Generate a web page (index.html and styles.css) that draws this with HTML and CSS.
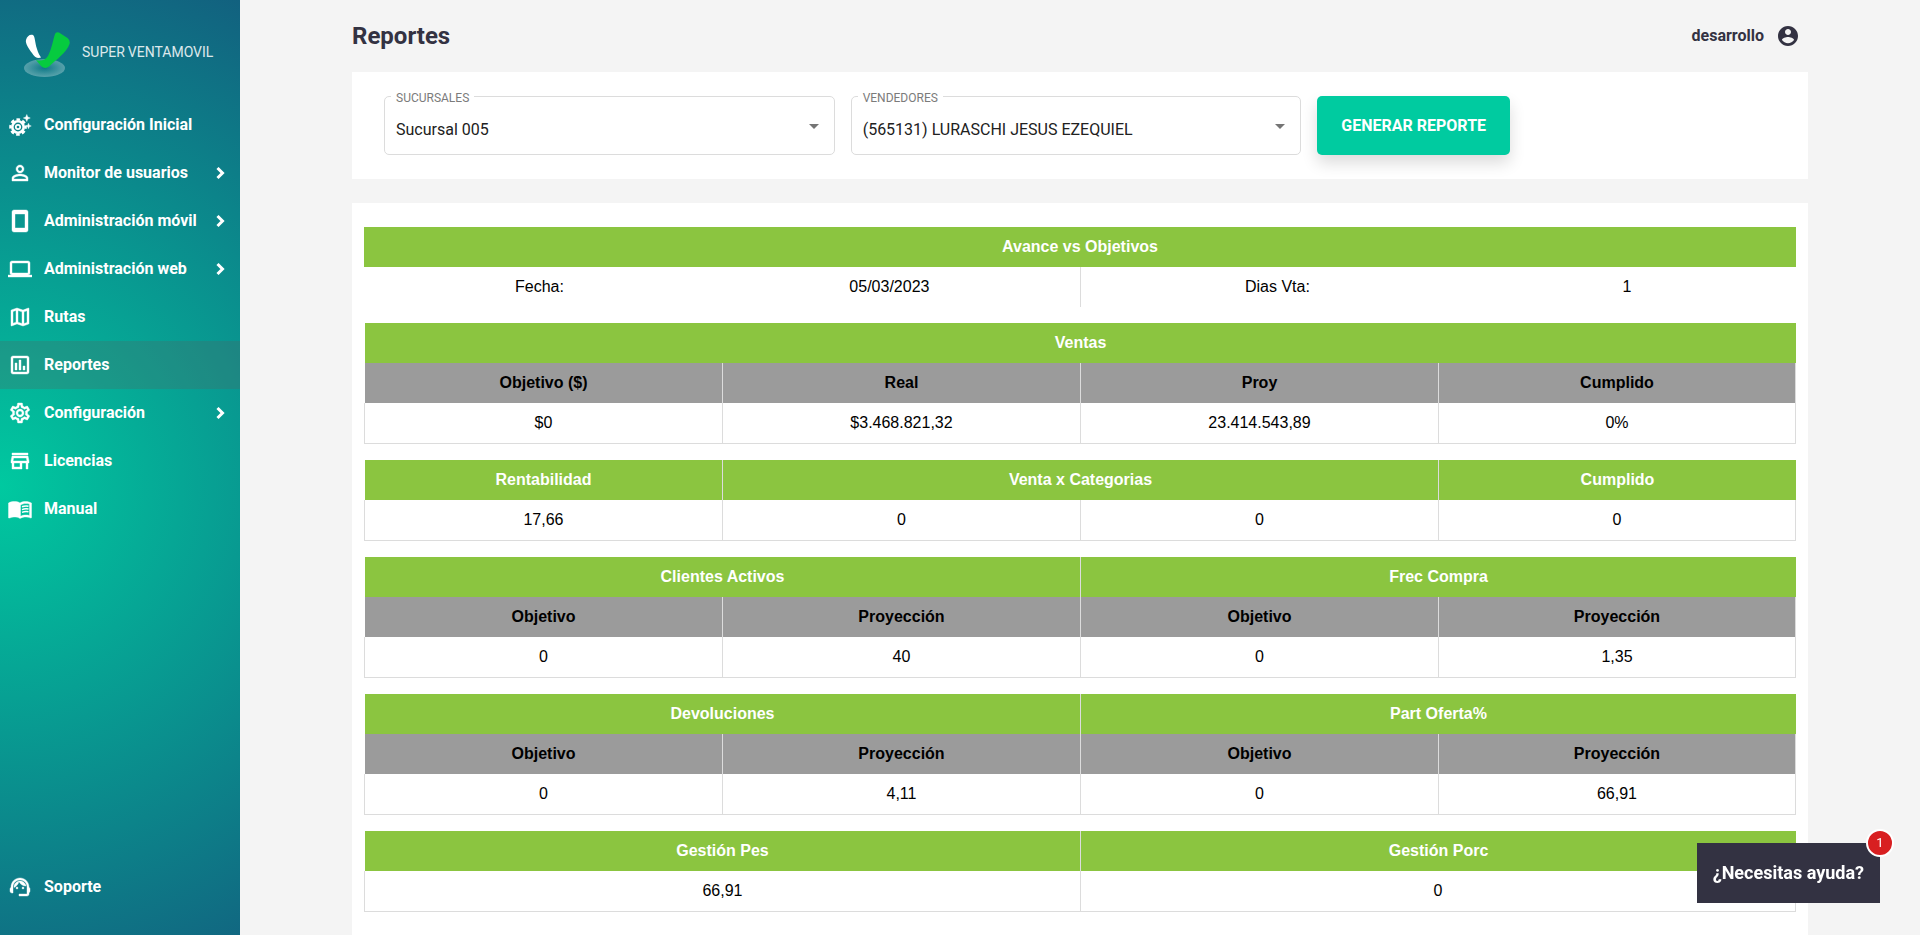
FILE: index.html
```html
<!DOCTYPE html>
<html lang="es">
<head>
<meta charset="utf-8">
<title>Reportes - Super Ventamovil</title>
<link rel="stylesheet" href="styles.css">
</head>
<body>
<div class="app">
  <aside class="sidebar">
    <a class="brand" href="#">
      <svg class="brand-mark" viewBox="0 1 48 48" aria-hidden="true">
        <defs>
          <radialGradient id="plate">
            <stop offset="0" stop-color="#fff" stop-opacity="0"/>
            <stop offset="0.8" stop-color="#fff" stop-opacity="0.25"/>
            <stop offset="1" stop-color="#fff" stop-opacity="0.3"/>
          </radialGradient>
        </defs>
        <ellipse cx="20.500" cy="37" rx="20.500" ry="9" fill="url(#plate)"/>
        <path d="M2 9C3 5 6 3 9 4C11 5 11 12 13 18C14 22 16 25 17 26.500C14 28 10 26 8 22C5 18 1 12 2 9Z" fill="#fff"/>
        <path d="M31 3Q32 0.500 35 1.500L43.500 7Q46.500 9.500 45.500 13C43 21 32 29 25 35.500Q21 38.500 17 35L12 29Q20 31 24 25C28 17 29 9 31 3Z" fill="#06cb3f"/>
      </svg>
      <span class="brand-name">SUPER<span class="brand-second">VENTAMOVIL</span></span>
    </a>
    <nav class="menu">
      <a class="item" href="#">
        <svg class="icon" viewBox="0 0 24 24"><g fill="none" stroke="currentColor"><circle cx="10" cy="14" r="5.700" stroke-width="2.600"/><circle cx="10" cy="14" r="7.600" stroke-width="2.400" stroke-dasharray="3.600 2.369" stroke-dashoffset="1.800"/><circle cx="10" cy="14" r="2.200" stroke-width="1.700"/></g><path d="M18.800 1.500l1 2.500 2.500 1-2.500 1-1 2.500-1-2.500-2.500-1 2.500-1zM20.500 10.200l.8 2 2 .8-2 .8-.8 2-.8-2-2-.8 2-.8z"/></svg>
        <span class="label">Configuración Inicial</span>
      </a>
      <a class="item" href="#">
        <svg class="icon" viewBox="0 0 24 24"><path d="M12 5.900c1.160 0 2.100.94 2.100 2.100s-.94 2.100-2.100 2.100S9.900 9.160 9.900 8s.94-2.100 2.100-2.100m0 9c2.970 0 6.100 1.460 6.100 2.100v1.100H5.900V17c0-.64 3.130-2.100 6.100-2.100M12 4C9.790 4 8 5.790 8 8s1.790 4 4 4 4-1.790 4-4-1.790-4-4-4zm0 9c-2.670 0-8 1.340-8 4v3h16v-3c0-2.660-5.330-4-8-4z"/></svg>
        <span class="label">Monitor de usuarios</span>
        <svg class="chevron" viewBox="0 0 24 24"><path d="M9.500 7l5 5-5 5"/></svg>
      </a>
      <a class="item" href="#">
        <svg class="icon" viewBox="0 0 24 24"><path d="M18 1H6c-1.100 0-2 .9-2 2v18c0 1.100.9 2 2 2h12c1.100 0 2-.9 2-2V3c0-1.100-.9-2-2-2zm-1 18H7V5h10v14z"/></svg>
        <span class="label">Administración móvil</span>
        <svg class="chevron" viewBox="0 0 24 24"><path d="M9.500 7l5 5-5 5"/></svg>
      </a>
      <a class="item" href="#">
        <svg class="icon" viewBox="0 0 24 24"><path d="M20 18c1.100 0 1.990-.9 1.990-2L22 6c0-1.100-.9-2-2-2H4c-1.100 0-2 .9-2 2v10c0 1.100.9 2 2 2H0v2h24v-2h-4zM4 6h16v10H4V6z"/></svg>
        <span class="label">Administración web</span>
        <svg class="chevron" viewBox="0 0 24 24"><path d="M9.500 7l5 5-5 5"/></svg>
      </a>
      <a class="item" href="#">
        <svg class="icon" viewBox="0 0 24 24"><path d="M20.500 3l-.16.03L15 5.100 9 3 3.360 4.900c-.21.07-.36.25-.36.48V20.500c0 .28.22.5.5.5l.16-.03L9 18.900l6 2.100 5.640-1.900c.21-.07.36-.25.36-.48V3.500c0-.28-.22-.5-.5-.5zM10 5.470l4 1.400v11.660l-4-1.400V5.470zm-5 .99l3-1.010v11.700l-3 1.160V6.460zm14 11.080l-3 1.010V6.860l3-1.160v11.840z"/></svg>
        <span class="label">Rutas</span>
      </a>
      <a class="item active" href="#" aria-current="page">
        <svg class="icon" viewBox="0 0 24 24"><path d="M19 3H5c-1.100 0-2 .9-2 2v14c0 1.100.9 2 2 2h14c1.100 0 2-.9 2-2V5c0-1.100-.9-2-2-2zm0 16H5V5h14v14zM7 10h2v7H7zm4-3h2v10h-2zm4 6h2v4h-2z"/></svg>
        <span class="label">Reportes</span>
      </a>
      <a class="item" href="#">
        <svg class="icon" viewBox="0 0 24 24"><path d="M19.430 12.980c.04-.32.07-.64.07-.98 0-.34-.03-.66-.07-.98l2.110-1.650c.19-.15.24-.42.12-.64l-2-3.460c-.09-.16-.26-.25-.44-.25-.06 0-.12.01-.17.03l-2.490 1c-.52-.4-1.080-.73-1.690-.98l-.38-2.650C14.460 2.180 14.250 2 14 2h-4c-.25 0-.46.18-.49.42l-.38 2.650c-.61.25-1.170.59-1.690.98l-2.490-1c-.06-.02-.12-.03-.18-.03-.17 0-.34.09-.43.25l-2 3.460c-.13.22-.07.49.12.64l2.110 1.650c-.04.32-.07.65-.07.98 0 .33.03.66.07.98l-2.110 1.650c-.19.15-.24.42-.12.64l2 3.460c.09.16.26.25.44.25.06 0 .12-.01.17-.03l2.490-1c.52.4 1.080.73 1.690.98l.38 2.650c.03.24.24.42.49.42h4c.25 0 .46-.18.49-.42l.38-2.650c.61-.25 1.170-.59 1.690-.98l2.490 1c.06.02.12.03.18.03.17 0 .34-.09.43-.25l2-3.460c.12-.22.07-.49-.12-.64l-2.110-1.650zm-1.980-1.710c.04.31.05.52.05.73 0 .21-.02.43-.05.73l-.14 1.130.89.7 1.080.84-.7 1.210-1.270-.51-1.040-.42-.9.68c-.43.32-.84.56-1.250.73l-1.060.43-.16 1.130-.2 1.350h-1.400l-.19-1.350-.16-1.130-1.060-.43c-.43-.18-.83-.41-1.230-.71l-.91-.7-1.060.43-1.270.51-.7-1.210 1.080-.84.89-.7-.14-1.130c-.03-.31-.05-.54-.05-.74s.02-.43.05-.73l.14-1.130-.89-.7-1.080-.84.7-1.210 1.270.51 1.040.42.9-.68c.43-.32.84-.56 1.250-.73l1.060-.43.16-1.130.2-1.350h1.390l.19 1.350.16 1.130 1.060.43c.43.18.83.41 1.230.71l.91.7 1.060-.43 1.270-.51.7 1.210-1.070.85-.89.7.14 1.130zM12 8c-2.210 0-4 1.790-4 4s1.790 4 4 4 4-1.790 4-4-1.790-4-4-4zm0 6c-1.100 0-2-.9-2-2s.9-2 2-2 2 .9 2 2-.9 2-2 2z"/></svg>
        <span class="label">Configuración</span>
        <svg class="chevron" viewBox="0 0 24 24"><path d="M9.500 7l5 5-5 5"/></svg>
      </a>
      <a class="item" href="#">
        <svg class="icon" viewBox="0 0 24 24"><path d="M18.360 9l.6 3H5.040l.6-3h12.720M20 4H4v2h16V4zm0 3H4l-1 5v2h1v6h10v-6h4v6h2v-6h1v-2l-1-5zM6 18v-4h6v4H6z"/></svg>
        <span class="label">Licencias</span>
      </a>
      <a class="item" href="#">
        <svg class="icon" viewBox="0 0 24 24"><path d="M21 5c-1.110-.35-2.330-.5-3.500-.5-1.950 0-4.050.4-5.500 1.500-1.450-1.100-3.550-1.500-5.500-1.500S1.950 4.900.5 6v14.650c0 .25.25.5.5.5.1 0 .15-.05.25-.05C2.600 20.450 5.050 20 6.500 20c1.950 0 4.050.4 5.500 1.500 1.350-.85 3.800-1.500 5.500-1.500 1.650 0 3.850.3 5.250 1.050.1.05.15.05.25.05.25 0 .5-.25.5-.5V6c-.6-.45-1.750-.75-2.500-1zm.5 13.500c-1.100-.35-2.800-.5-4-.5-1.700 0-3.650.45-5 1.300V8c1.350-.85 3.300-1.500 5-1.500 1.200 0 2.900.15 4 .5v11.500z"/><path d="M14 9.800q3-1.300 6.500-.6M14 12.600q3-1.300 6.500-.6M14 15.400q3-1.300 6.500-.6" fill="none" stroke="currentColor" stroke-width="1.500"/></svg>
        <span class="label">Manual</span>
      </a>
    </nav>
    <a class="item" href="#">
      <svg class="icon" viewBox="0 0 24 24"><path d="M21 12.220C21 6.730 16.740 3 12 3c-4.690 0-9 3.650-9 9.280-.6.34-1 .98-1 1.720v2c0 1.100.9 2 2 2h1v-6.100c0-3.870 3.130-7 7-7s7 3.130 7 7V19h-8v2h8c1.100 0 2-.9 2-2v-1.220c.59-.31 1-.92 1-1.640v-2.300c0-.7-.41-1.310-1-1.620z"/><circle cx="9" cy="13" r="1"/><circle cx="15" cy="13" r="1"/><path d="M18 11.030C17.520 8.180 15.040 6 12.050 6c-3.030 0-6.290 2.510-6.030 6.450 2.470-1.010 4.330-3.210 4.860-5.890 1.310 2.630 4 4.440 7.120 4.470z"/></svg>
      <span class="label">Soporte</span>
    </a>
  </aside>

  <main class="main">
    <header class="topbar">
      <h1 class="title">Reportes</h1>
      <a class="user" href="#">
        <span>desarrollo</span>
        <svg class="icon" viewBox="0 0 24 24" aria-hidden="true"><path d="M12 2C6.480 2 2 6.480 2 12s4.480 10 10 10 10-4.480 10-10S17.520 2 12 2zm0 3c1.660 0 3 1.340 3 3s-1.340 3-3 3-3-1.340-3-3 1.340-3 3-3zm0 14.200c-2.500 0-4.710-1.280-6-3.220.03-1.990 4-3.080 6-3.080 1.990 0 5.970 1.090 6 3.080-1.290 1.940-3.500 3.220-6 3.220z"/></svg>
      </a>
    </header>

    <form class="panel filters">
      <div class="field">
        <label class="field-label" for="sucursal">SUCURSALES</label>
        <select class="select" id="sucursal"><option>Sucursal 005</option></select>
        <svg class="arrow" viewBox="0 0 10 5" aria-hidden="true"><path d="M0 0h10L5 5z"/></svg>
      </div>
      <div class="field">
        <label class="field-label" for="vendedor">VENDEDORES</label>
        <select class="select" id="vendedor"><option>(565131) LURASCHI JESUS EZEQUIEL</option></select>
        <svg class="arrow" viewBox="0 0 10 5" aria-hidden="true"><path d="M0 0h10L5 5z"/></svg>
      </div>
      <button class="generate" type="button">GENERAR REPORTE</button>
    </form>

    <section class="panel report">
      <table class="grid summary">
        <colgroup><col class="date-label"><col class="date-value"><col class="days-label"><col class="days-value"></colgroup>
        <thead><tr class="head"><th colspan="4">Avance vs Objetivos</th></tr></thead>
        <tbody><tr><td>Fecha:</td><td>05/03/2023</td><td class="divided">Dias Vta:</td><td>1</td></tr></tbody>
      </table>
      <table class="grid boxed">
        <thead>
          <tr class="head"><th colspan="4">Ventas</th></tr>
          <tr class="sub"><th>Objetivo ($)</th><th>Real</th><th>Proy</th><th>Cumplido</th></tr>
        </thead>
        <tbody><tr><td>$0</td><td>$3.468.821,32</td><td>23.414.543,89</td><td>0%</td></tr></tbody>
      </table>
      <table class="grid boxed">
        <colgroup><col><col><col><col></colgroup>
        <thead><tr class="head"><th>Rentabilidad</th><th colspan="2">Venta x Categorias</th><th>Cumplido</th></tr></thead>
        <tbody><tr><td>17,66</td><td>0</td><td>0</td><td>0</td></tr></tbody>
      </table>
      <table class="grid boxed">
        <thead>
          <tr class="head"><th colspan="2">Clientes Activos</th><th colspan="2">Frec Compra</th></tr>
          <tr class="sub"><th>Objetivo</th><th>Proyección</th><th>Objetivo</th><th>Proyección</th></tr>
        </thead>
        <tbody><tr><td>0</td><td>40</td><td>0</td><td>1,35</td></tr></tbody>
      </table>
      <table class="grid boxed">
        <thead>
          <tr class="head"><th colspan="2">Devoluciones</th><th colspan="2">Part Oferta%</th></tr>
          <tr class="sub"><th>Objetivo</th><th>Proyección</th><th>Objetivo</th><th>Proyección</th></tr>
        </thead>
        <tbody><tr><td>0</td><td>4,11</td><td>0</td><td>66,91</td></tr></tbody>
      </table>
      <table class="grid boxed">
        <thead><tr class="head"><th>Gestión Pes</th><th>Gestión Porc</th></tr></thead>
        <tbody><tr><td>66,91</td><td>0</td></tr></tbody>
      </table>
    </section>
  </main>
</div>

<button class="help" type="button">¿Necesitas ayuda?<span class="badge">1</span></button>
</body>
</html>
```

FILE: styles.css
```css
* {
  box-sizing: border-box;
}

body {
  margin: 0;
  background: #f4f4f4;
  color: #333242;
  font: 16px/24px Roboto, sans-serif;
}

a {
  color: inherit;
  text-decoration: none;
}

.app {
  display: flex;
  min-height: 100vh;
}

/* Sidebar */
.sidebar {
  position: sticky;
  top: 0;
  display: flex;
  flex: none;
  flex-direction: column;
  width: 240px;
  height: 100vh;
  padding: 32px 0 24px;
  background: radial-gradient(circle at 0 52%, #00c9a0, #12617f);
  color: #fff;
}

.brand {
  display: flex;
  align-items: flex-start;
  gap: 10px;
  margin-bottom: 21px;
  padding-left: 24px;
}

.brand-mark {
  width: 48px;
  height: 48px;
}

.brand-name {
  padding-top: 8px;
  font-size: 14px;
  opacity: 0.85;
}

.brand-second {
  margin-left: 3px;
}

.menu {
  flex: 1;
}

.item {
  display: flex;
  align-items: center;
  gap: 12px;
  height: 48px;
  padding: 0 8px;
  font-weight: 700;
  white-space: nowrap;
}

.item .icon {
  stroke: currentColor;
  stroke-width: 0.4;
}

.active {
  background: rgba(90, 90, 90, 0.25);
}

.label {
  flex: 1;
  min-width: 0;
}

.icon {
  flex: none;
  width: 24px;
  height: 24px;
  fill: currentColor;
}

.chevron {
  flex: none;
  width: 24px;
  height: 24px;
  fill: none;
  stroke: currentColor;
  stroke-width: 3;
}

/* Content */
.main {
  display: flex;
  flex: 1;
  flex-direction: column;
  min-width: 0;
  padding: 0 112px;
}

.topbar {
  display: flex;
  align-items: center;
  justify-content: space-between;
  height: 72px;
  padding-right: 8px;
}

.title {
  margin: 0;
  font-size: 24px;
  font-weight: 700;
}

.user {
  display: flex;
  align-items: center;
  gap: 12px;
  font-weight: 700;
}

.panel {
  background: #fff;
}

.filters {
  display: grid;
  grid-template-columns: repeat(3, 1fr);
  gap: 16px;
  margin-bottom: 24px;
  padding: 24px 40px 24px 32px;
}

.field {
  position: relative;
}

.field-label {
  position: absolute;
  top: -6px;
  left: 7px;
  padding: 0 5px;
  background: #fff;
  color: #7b7b7b;
  font-size: 12px;
  line-height: 16px;
}

.select {
  display: block;
  width: 100%;
  height: 59px;
  padding: 8px 40px 0 11px;
  border: 1px solid #dcdcdc;
  border-radius: 5px;
  appearance: none;
  background: #fff;
  color: #212121;
  font: inherit;
}

.arrow {
  position: absolute;
  top: 28px;
  right: 16px;
  width: 10px;
  height: 5px;
  fill: #757575;
  pointer-events: none;
}

.generate {
  justify-self: start;
  height: 59px;
  padding: 0 24px;
  border: 0;
  border-radius: 5px;
  background: #00cba0;
  box-shadow: 0 8px 16px rgba(0, 0, 0, 0.14);
  color: #fff;
  font: inherit;
  font-weight: 700;
}

/* Report tables */
.report {
  display: flex;
  flex: 1;
  flex-direction: column;
  gap: 16px;
  padding: 24px 12px;
}

.grid {
  width: 100%;
  border-spacing: 0;
  table-layout: fixed;
  color: #000;
  font-family: Arial, "Liberation Sans", sans-serif;
  text-align: center;
}

.grid th,
.grid td {
  height: 40px;
  padding: 0;
}

.date-label {
  width: 24.5%;
}

.date-value {
  width: 25.5%;
}

.days-label {
  width: 27.5%;
}

.days-value {
  width: 22.5%;
}

.summary td:nth-child(even) {
  padding-right: 16px;
}

.head {
  color: #fff;
}

.head th {
  background: #8bc540 padding-box;
}

.sub th {
  background: #9b9b9b padding-box;
}

.divided,
.boxed th,
.boxed td {
  border-left: 1px solid #dcdcdc;
}

.boxed th:first-child {
  border-left-color: transparent;
}

.boxed .sub th:last-child,
.boxed td:last-child {
  border-right: 1px solid #dcdcdc;
}

.boxed td {
  height: 41px;
  border-bottom: 1px solid #dcdcdc;
}

/* Help launcher */
.help {
  position: fixed;
  right: 40px;
  bottom: 32px;
  height: 60px;
  padding: 0 16px;
  border: 0;
  background: #333242;
  color: #fff;
  font: 700 18px/24px Roboto, sans-serif;
}

.badge {
  position: absolute;
  top: -14px;
  right: -14px;
  width: 28px;
  height: 28px;
  border: 2px solid #fff;
  border-radius: 50%;
  background: #d81f21;
  font-size: 13px;
  font-weight: 400;
}
```
